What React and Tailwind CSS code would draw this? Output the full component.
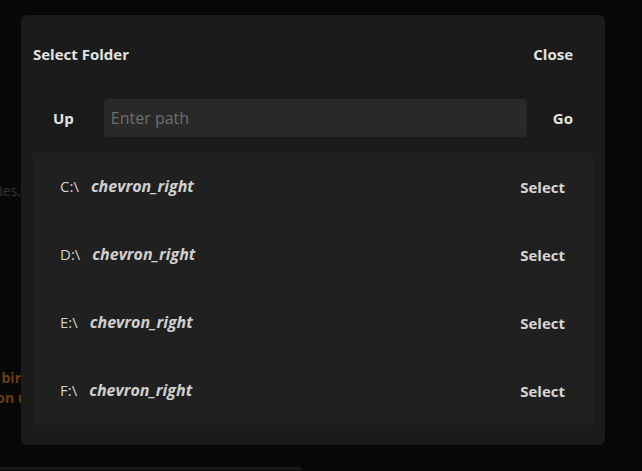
import { useState } from 'react'

const DRIVES = ['C:\\', 'D:\\', 'E:\\', 'F:\\']

function Backdrop() {
  return (
    <div className="relative h-[471px] w-full overflow-hidden bg-[#080808]">
      <div className="flex h-full flex-col">
        <div className="h-[180px]" />
        <div className="flex h-[20px] w-[21px] justify-end">
          <span className="whitespace-nowrap text-[14px] text-[#353535]">ies.</span>
        </div>
        <div className="h-[168px]" />
        <div className="flex flex-col text-[14px] font-bold leading-[20px] text-[#6a3e0d]">
          <div className="flex w-[21px] justify-end">
            <span className="whitespace-nowrap">a bir</span>
          </div>
          <div className="flex w-[27px] justify-end">
            <span className="whitespace-nowrap">tion u</span>
          </div>
        </div>
        <div className="flex-1" />
        <div className="mb-px h-[3px] w-[302px] rounded-tr-md bg-[#1a1a1a]" />
      </div>
    </div>
  )
}

export default function App() {
  const [path, setPath] = useState('')

  return (
    <div className="relative font-['Open_Sans',sans-serif]">
      <Backdrop />

      {/* Modal */}
      <div className="absolute left-[21px] top-[15px] flex h-[430px] w-[584px] flex-col rounded-md bg-[#1b1b1b] px-3">
        {/* Header */}
        <div className="flex h-[78px] items-center justify-between">
          <span className="text-[15px] font-bold text-[#e2e2e2]">Select Folder</span>
          <button className="px-5 text-[15px] font-bold text-[#e2e2e2]">Close</button>
        </div>

        {/* Path bar */}
        <div className="flex h-[50px] items-center">
          <button className="px-5 text-[15px] font-bold text-[#e2e2e2]">Up</button>
          <input
            value={path}
            onChange={e => setPath(e.target.value)}
            placeholder="Enter path"
            className="ml-[10px] h-[38px] min-w-0 flex-1 rounded bg-[#292929] px-[7px] text-[16px] text-[#ddd] outline-none placeholder:text-[#6e6e6e]"
          />
          <button className="ml-[6px] px-5 text-[15px] font-bold text-[#e2e2e2]">Go</button>
        </div>

        {/* Drive list */}
        <div className="mt-[10px] flex flex-col bg-[#202020]">
          {DRIVES.map(d => (
            <div key={d} className="flex h-[68px] items-center justify-between pl-[27px] pr-[28px]">
              <div className="-mt-[2px] flex items-center gap-[12px]">
                <span className="text-[15px] text-[#cfcfcf]">{d}</span>
                <span className="text-[16px] font-bold italic text-[#cfcfcf]">chevron_right</span>
              </div>
              <button className="text-[15px] font-bold text-[#d6d6d6]">Select</button>
            </div>
          ))}
        </div>
      </div>
    </div>
  )
}
